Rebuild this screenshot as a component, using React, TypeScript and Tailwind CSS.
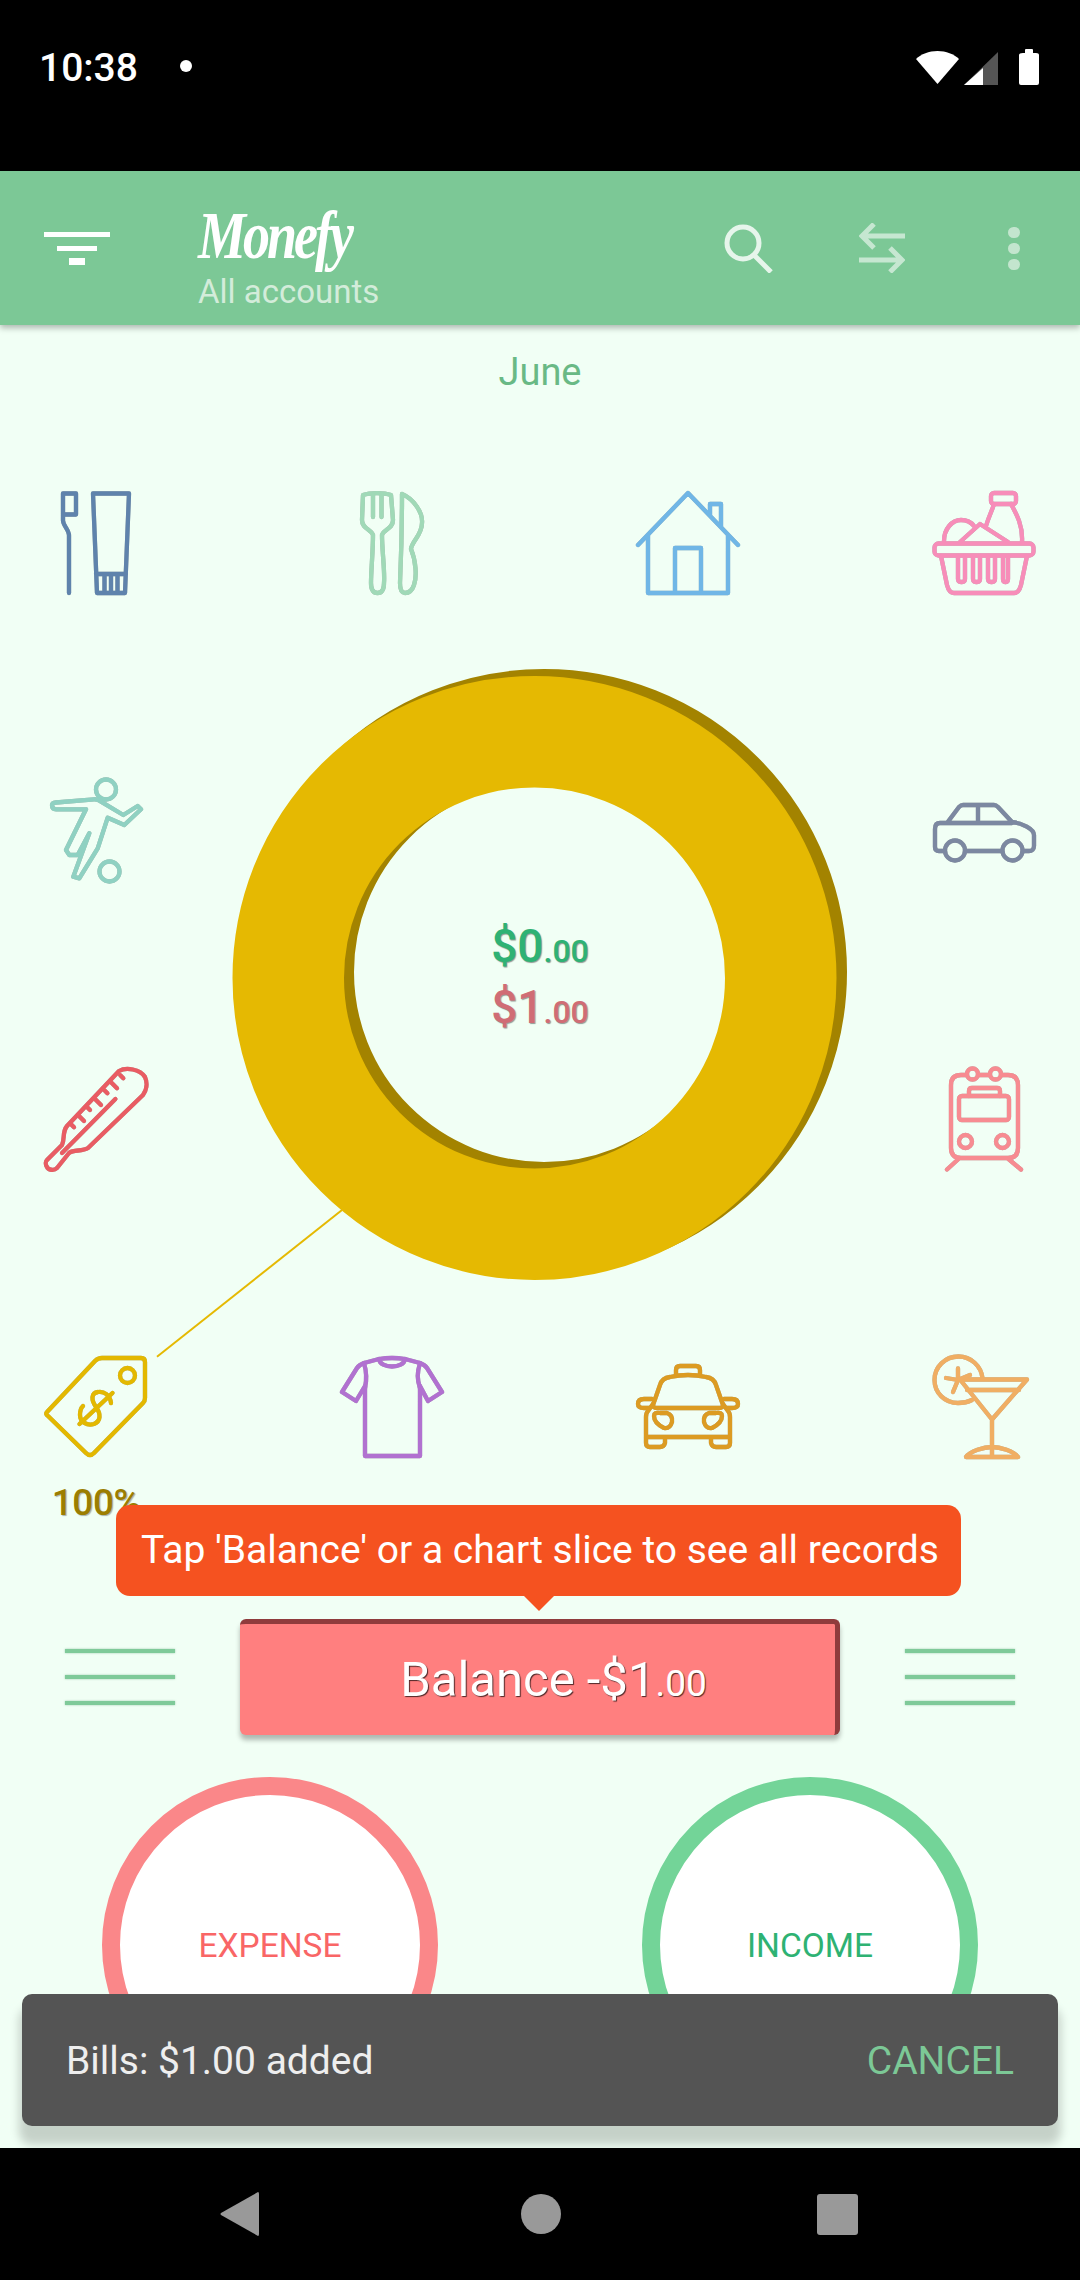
import React from "react";

const iconClass = "w-[104px] h-[104px] overflow-visible drop-shadow-[0.6px_0.6px_0.5px_rgba(0,0,0,0.3)]";

function Icon({ color, sw = 4.3, children }: { color: string; sw?: number; children: React.ReactNode }) {
  return (
    <svg viewBox="0 0 104 104" className={iconClass} fill="none" stroke={color} strokeWidth={sw} strokeLinecap="round" strokeLinejoin="round">
      {children}
    </svg>
  );
}

const Toothpaste = () => (
  <Icon color="#5f83ac">
    <path d="M19 2.500h13v21H19zM19 23.500v6c0 5 6 9 6 15v57.500" />
    <path d="M49 2.500H85L81 102H53ZM52 83H82M60.500 84V101M67 84V101M73.500 84V101" />
  </Icon>
);
const Fork = () => (
  <Icon color="#a0d9b7">
    <path d="M23 4C30 1.500 44 1.500 51 4L53 29C53 38 44 38 42 44C42 60 45 80 44 92C44 100 41 102 37.500 102C34 102 31 100 31 92C31 80 33 60 33 44C31 38 22 38 22 29Z" />
    <path d="M33 4V26M41.500 4V26" />
    <path d="M62 3C74 8 83 22 82 32C82 44 72 50 71 58C76 70 77 86 74 94C72 100 69 102 65 102C61 102 60 98 60 92C61 70 62 30 62 3Z" />
  </Icon>
);
const House = () => (
  <Icon color="#70b6e6">
    <path d="M2 54L52 2L102 54M12 44V102H92V44M39 102V57H65V102M74 24V13H85V36" />
  </Icon>
);
const Basket = () => (
  <Icon color="#f78db9">
    <rect x="2.500" y="52.500" width="99" height="12" rx="4" />
    <path d="M9 65L15 94Q17 102 22 102H82Q87 102 89 94L95 65" />
    <path d="M26 65V88Q26 91 29 91H30Q33 91 33 88V65M41 65V88Q41 91 44 91H45Q48 91 48 88V65M56 65V88Q56 91 59 91H60Q63 91 63 88V65M71 65V88Q71 91 73 91H74Q76 91 76 88V65" />
    <rect x="59" y="2" width="25" height="11" rx="3" />
    <path d="M62 13C60 20 57 25 54 35M79 13C85 24 91 35 90 51M28 51L48 33L76 51M12 50C12 38 20 29 29 29C35 29 39 31 42 35" />
  </Icon>
);
const Soccer = () => (
  <Icon color="#8fd1c2">
    <circle cx="62" cy="10.500" r="10" />
    <circle cx="65.500" cy="92.500" r="10" />
    <path d="M8 26Q8 24 12 23.500L50 20.300Q54 20 57 22.700L79.300 36L93.700 27L97 30.300L80.300 46L63.700 38.700L53.700 69.300L35.300 99.300L29.300 97.700L45.300 54.300L33.700 76H25.300L22 71L42 30.300H12Q8 30.300 8 26Z" />
  </Icon>
);
const Car = () => (
  <Icon color="#7c88a1">
    <circle cx="23" cy="71.500" r="10" />
    <circle cx="80.500" cy="71.500" r="10" />
    <path d="M13 72H7C4 72 3 70 3 68V50C3 46 5 44 8 44H15L27 28C28 27 29 26 31 26H62C64 26 65 27 66 28L80 43C90 44 102 50 102 56V67C102 70 100 72 97 72H91M33 72H70M15 44H80M46 26V44" />
  </Icon>
);
const Thermometer = () => (
  <Icon color="#e95c63">
    <path d="M75 4C82 0 96 2 101 10C104 17 102 24 99 28L44 81C38 85 30 82 25 86L13 101C10 104 4 103 3 100C1 97 2 94 3 93L18 78C21 72 18 65 23 59Z" />
    <path d="M71.400 32L18 86" />
    <path d="M79.300 11.300l-3-3M73 21.300l-6-6M63.400 26.300l-3-3M57 38l-6-6M46 43l-3-3M40 54l-6-6M30 60.300l-3-3" />
  </Icon>
);
const Train = () => (
  <Icon color="#f78b91">
    <path d="M35 8H29Q19 8 19 18V81Q19 91 29 91H76Q86 91 86 81V18Q86 8 76 8H69M46 8H58" />
    <circle cx="40.500" cy="7" r="5.500" />
    <circle cx="63.500" cy="7" r="5.500" />
    <rect x="27" y="29" width="50" height="24" rx="3" />
    <path d="M37 29V24Q37 21 40 21H65Q68 21 68 24V29" />
    <circle cx="33.500" cy="74.500" r="6.500" />
    <circle cx="70.500" cy="74.500" r="6.500" />
    <path d="M26.500 92L15 102.500M76.500 92L89 102.500" />
  </Icon>
);
const Tag = () => (
  <Icon color="#e3b800">
    <path d="M3 57L51 6Q54 3 58 3H97Q101 3 101 7V43Q101 46 99 48L50 98Q46 102 42 98L4 61Q1 59 3 57Z" />
    <circle cx="83.500" cy="20.500" r="7.500" />
    <path d="M67 48C66 40 60 36 54 37C47 38 47 45 52 52C57 59 57 66 50 69C43 71 36 67 36 60C36 56 37 53 39 51M35.500 69L68.500 38" />
  </Icon>
);
const Shirt = () => (
  <Icon color="#b171d0">
    <path d="M39 4L24 8Q19 10 17 13L2 37L16 46L25 31V101H80V31L88 46L102 37L87 13Q85 10 80 8L65 4Q52 2 39 4Z" />
    <path d="M39 4C40 14 64 14 65 4M24 8C27 18 27 24 25 33M80 8C77 18 77 24 80 33" />
  </Icon>
);
const Taxi = () => (
  <Icon color="#dc9b22">
    <path d="M40 20V15Q40 11 44 11H60Q64 11 64 15V20" />
    <path d="M17 50L24 30Q26 23 34 22Q52 18 70 22Q78 23 80 30L87 50Q87 53 83 53H21Q17 53 17 50Z" />
    <path d="M17 49L12 56Q10 58 10 62V88Q10 92 14 92H24Q28 92 29 88V82H75V88Q76 92 80 92H90Q94 92 94 88V62Q94 58 92 56L87 49M10 82H94" />
    <path d="M16 44H8Q2 44 2 49Q2 53 8 53H13M88 44H96Q102 44 102 49Q102 53 96 53H91" />
    <path d="M18 61Q18 57 24 58H31Q37 60 36 67Q34 74 28 73Q18 68 18 61ZM86 61Q86 57 80 58H73Q67 60 68 67Q70 74 76 73Q86 68 86 61Z" />
  </Icon>
);
const Cocktail = () => (
  <Icon color="#f0ae63">
    <path d="M50.500 23C49 11 39 1.500 26.500 1.500C13 1.500 2.500 12 2.500 25C2.500 38 13 48 26 48C31 48 36 47 40 45" />
    <path d="M28 24.500H95L60 64.500ZM35 35H87M60 64.500V100M34 102C38 96 52 92 60 92C68 92 82 96 86 102Z" />
    <path d="M26 25L26 13.500M26 25L14 23M26 25L21 37M26 25L38 20" />
  </Icon>
);

const ThreeLines = () => (
  <div className="flex flex-col gap-[22px] w-[110px]">
    <div className="h-[4px] bg-[#7fca99] shadow-[0_0_2px_rgba(60,140,90,0.5)]" />
    <div className="h-[4px] bg-[#7fca99] shadow-[0_0_2px_rgba(60,140,90,0.5)]" />
    <div className="h-[4px] bg-[#7fca99] shadow-[0_0_2px_rgba(60,140,90,0.5)]" />
  </div>
);

function Money({ main, color }: { main: string; color: string }) {
  return (
    <div className="h-[61px] leading-[61px] font-medium [text-shadow:1px_1px_1px_rgba(0,0,0,0.4)] text-[46px]" style={{ color }}>
      {main}
      <span className="text-[32px]">.00</span>
    </div>
  );
}

export default function App() {
  return (
    <div className="w-[1080px] h-[2280px] relative overflow-hidden flex flex-col bg-[#f1fff5] [font-family:Roboto,sans-serif]">
      {/* status bar */}
      <div className="h-[171px] bg-black shrink-0">
        <div className="h-[136px] flex items-center pl-[39px] pr-[41px] text-white">
          <span className="text-[39px] font-medium leading-none w-[141px]">10:38</span>
          <span className="w-[12px] h-[12px] rounded-full bg-white mb-[4px]" />
          <svg viewBox="0 0 43 33" className="w-[43px] h-[33px] ml-auto mb-[2px]">
            <path d="M0 8C5 3 13 0 21.500 0C30 0 38 3 43 8L21.500 33Z" fill="#fff" />
          </svg>
          <svg viewBox="0 0 34 33" className="w-[34px] h-[33px] ml-[5px]">
            <path d="M34 0V33H0Z" fill="#555" />
            <path d="M19 16V33H0Z" fill="#fff" />
          </svg>
          <svg viewBox="0 0 20 36" className="w-[20px] h-[36px] ml-[21px] mb-[2px]">
            <path d="M4 4H6V1Q6 0 7 0H13Q14 0 14 1V4H17Q20 4 20 6V34Q20 36 18 36H2Q0 36 0 34V6Q0 4 4 4Z" fill="#fff" />
          </svg>
        </div>
      </div>

      {/* app bar */}
      <div className="h-[154px] shrink-0 relative z-10 bg-[#7cc896] shadow-[0_3px_6px_rgba(0,0,0,0.28)] flex items-center pl-[44px] pr-[60px]">
        <svg viewBox="0 0 66 33" className="w-[66px] h-[33px]" fill="#fff">
          <rect x="0" y="0" width="66" height="5" />
          <rect x="13" y="14" width="40" height="5" />
          <rect x="25" y="26" width="16" height="7" />
        </svg>
        <div className="ml-[88px] flex flex-col self-start pt-[26px]">
          <span className="text-white text-[54px] leading-[62px] h-[78px] italic font-bold tracking-[-3px] origin-top scale-y-[1.25] [font-family:'Liberation_Serif',serif]">Monefy</span>
          <span className="text-[#d3ecda] text-[33px] leading-[34px]">All accounts</span>
        </div>
        <svg viewBox="0 0 49 49" className="w-[49px] h-[49px] ml-auto" fill="none" stroke="#e6f5eb" strokeWidth="5">
          <circle cx="19" cy="19" r="16" />
          <path d="M30 31L47 48" />
        </svg>
        <svg viewBox="0 0 46 50" className="w-[46px] h-[50px] ml-[86px] opacity-70" fill="none" stroke="#e6f5eb" strokeWidth="5">
          <path d="M46 13H4M15 1L3 13L15 25M0 37H42M31 25L43 37L31 49" />
        </svg>
        <div className="ml-[103px] flex flex-col gap-[5px]">
          <span className="w-[12px] h-[11px] rounded-full bg-[#c3e5ce]" />
          <span className="w-[12px] h-[11px] rounded-full bg-[#c3e5ce]" />
          <span className="w-[12px] h-[11px] rounded-full bg-[#c3e5ce]" />
        </div>
      </div>

      {/* content */}
      <div className="flex-1 min-h-0 overflow-hidden flex flex-col">
        <div className="h-[166px] pt-[25px] shrink-0 text-center text-[38px] leading-[44px] text-[#69b985]">June</div>

        <div className="relative shrink-0">
          {/* the chart sits over the ring of icons */}
          <svg viewBox="0 0 1080 968" className="absolute left-0 top-0 w-[1080px] h-[968px]" fill="none">
            <path d="M157 865.700L342 719" stroke="#e5b902" strokeWidth="2" />
            <circle cx="544" cy="481" r="246.500" stroke="#a38300" strokeWidth="113" />
            <circle cx="534.500" cy="487" r="246.250" stroke="#e5b902" strokeWidth="111.500" />
          </svg>
          <div className="absolute left-0 right-0 top-[425px] flex flex-col items-center">
            <Money main="$0" color="#2fb274" />
            <Money main="$1" color="#d06d75" />
          </div>

          <div className="relative grid grid-cols-[104px_104px_104px_104px] justify-between px-[44px] gap-y-[184px] grid-rows-[104px_104px_104px_104px]">
            <Toothpaste />
            <Fork />
            <House />
            <Basket />
            <Soccer />
            <div />
            <div />
            <Car />
            <Thermometer />
            <div />
            <div />
            <Train />
            <div className="flex flex-col items-center">
              <Tag />
              <span className="mt-[23px] text-[37px] leading-[42px] font-medium tracking-[-0.5px] text-[#9c7e00] [text-shadow:1px_1px_1px_rgba(0,0,0,0.3)]">100%</span>
            </div>
            <Shirt />
            <Taxi />
            <Cocktail />
          </div>
        </div>

        <div className="shrink-0 mt-[160px] flex items-center justify-between px-[65px]">
          <ThreeLines />
          <div className="w-[600px] h-[116px] rounded-[6px] bg-[#ff7f7f] border-t-[5px] border-r-[5px] border-[#8f3b3c] shadow-[0_5px_5px_rgba(0,0,0,0.28)] flex items-center justify-center pl-[32px] text-white text-[49px] [text-shadow:1px_1px_1px_rgba(0,0,0,0.7)]">
            <span>
              Balance -$1<span className="text-[37px]">.00</span>
            </span>
          </div>
          <ThreeLines />
        </div>

        <div className="shrink-0 mt-[42px] flex justify-between pl-[102px] pr-[102px]">
          <div className="w-[336px] h-[336px] rounded-full bg-white border-[18px] border-[#fa8789] flex items-center justify-center pt-[2px] text-[33.500px] text-[#f96666]">EXPENSE</div>
          <div className="w-[336px] h-[336px] rounded-full bg-white border-[18px] border-[#73d498] flex items-center justify-center pt-[2px] text-[33.500px] text-[#2eb273]">INCOME</div>
        </div>
      </div>

      {/* nav bar */}
      <div className="h-[132px] shrink-0 relative z-10 bg-black flex items-center pl-[220px]">
        <svg viewBox="0 0 40 44" className="w-[40px] h-[44px]">
          <path d="M38 0Q39 0 39 2V42Q39 44 38 44L1 23Q0 22 1 21Z" fill="#999" />
        </svg>
        <span className="ml-[261px] w-[40px] h-[40px] rounded-full bg-[#999]" />
        <span className="ml-[256px] w-[41px] h-[41px] rounded-[3px] bg-[#999]" />
      </div>

      {/* tooltip */}
      <div className="absolute left-[116px] top-[1505px] w-[845px] h-[91px] rounded-[14px] bg-[#f55220] flex items-center justify-center pl-[3px] text-white text-[39px]">
        Tap 'Balance' or a chart slice to see all records
        <span className="absolute left-[408px] top-[91px] border-x-[15px] border-t-[15px] border-x-transparent border-t-[#f55220]" />
      </div>

      {/* snackbar */}
      <div className="absolute left-[22px] top-[1994px] w-[1036px] h-[132px] rounded-[10px] bg-[#545454] shadow-[0_16px_10px_3px_rgba(0,0,0,0.18)] flex items-center justify-between pl-[44px] pr-[44px] pt-[3px] text-[39px]">
        <span className="text-[#eeeeee]">Bills: $1.00 added</span>
        <span className="text-[#7cc896]">CANCEL</span>
      </div>
    </div>
  );
}
